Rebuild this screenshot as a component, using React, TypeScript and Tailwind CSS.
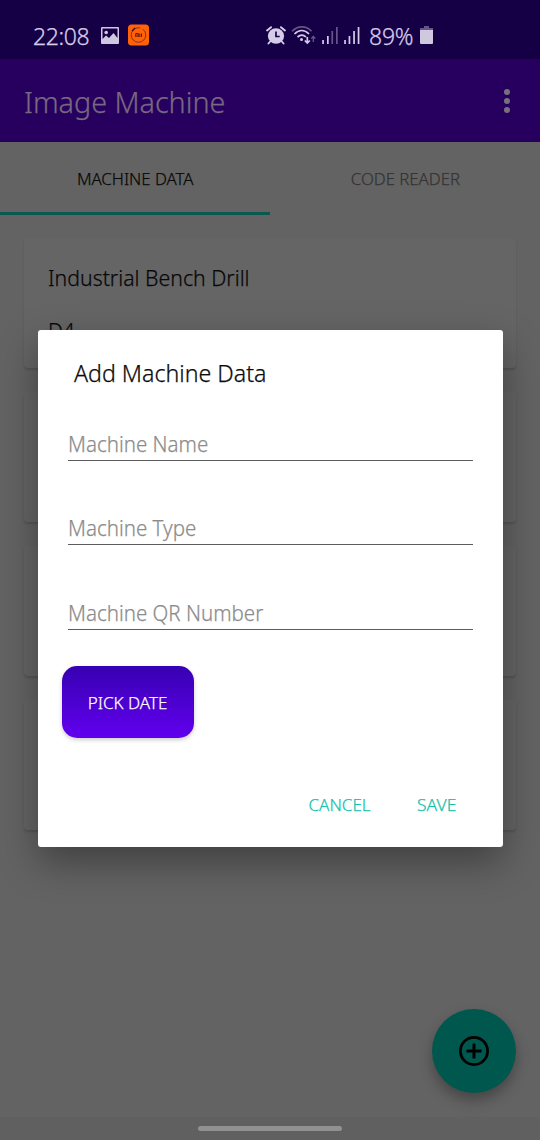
import type { ReactNode } from "react";

function StatusBar() {
  return (
    <div className="flex h-[59px] items-start bg-[#160045] pl-[33px] pt-[24px] text-[#d5cce8]">
      <span className="w-[68px] text-[23px] leading-[24px] tracking-[-0.35px]">22:08</span>
      <svg className="mt-[3px] h-[17px] w-[18px]" viewBox="0 0 18 17">
        <path fill="#cfc8df" fillRule="evenodd" d="M1 0h16a1 1 0 0 1 1 1v15a1 1 0 0 1-1 1H1a1 1 0 0 1-1-1V1a1 1 0 0 1 1-1Zm.5 1.500v10.500l3.500-3.500 3 2.500 4.500-5 4 5V1.500Z" />
        <circle cx="5.200" cy="5.500" r="1.800" fill="#cfc8df" />
      </svg>
      <svg className="ml-[9px] h-[22px] w-[21px]" viewBox="0 0 21 22">
        <rect y="0.500" width="21" height="21" rx="3.500" fill="#ff6208" />
        <circle cx="10.500" cy="11" r="7.300" fill="none" stroke="#7a2c18" strokeWidth="0.900" strokeDasharray="36 3" />
        <path d="M4 7l3-3" stroke="#3a1010" strokeWidth="1.200" />
        <path d="M7.700 13V9.500h2.600v3.500M9 10.500V13M11.800 9.500V13M13.500 9.500V13" fill="none" stroke="#5b1d18" strokeWidth="1" />
      </svg>
      <svg className="ml-[117px] mt-[2px] h-[19px] w-[20px]" viewBox="0 0 19 19" preserveAspectRatio="none">
        <circle cx="9.500" cy="10" r="7.700" fill="#d5cce8" />
        <path d="M1 4.500 4.800 1.200M18 4.500l-3.800-3.300M4 15.500l-1.700 2M15 15.500l1.700 2" stroke="#d5cce8" strokeWidth="1.800" strokeLinecap="round" />
        <path d="M9.500 5.500v5H13" fill="none" stroke="#160045" strokeWidth="1.600" />
      </svg>
      <svg className="ml-[5px] mt-[1px] h-[20px] w-[25px]" viewBox="0 0 25 20" fill="none" strokeWidth="1.700">
        <path d="M1 6.300C6.500.3 15.500.3 20.500 6.300" stroke="#65558a" />
        <path d="M3.500 9C8 4.500 13.500 4.500 18 9M6.500 12c3-2.700 5.700-2.700 8.500 0" stroke="#d5cce8" />
        <circle cx="10.500" cy="14.500" r="1.500" fill="#d5cce8" />
        <path d="M16.300 12v5.500M13.800 15.500l2.500 2.500 2.500-2.500" stroke="#d5cce8" />
        <path d="M22.300 17v-5M20.300 13.500l2-2 2 2" stroke="#65558a" strokeWidth="1.300" />
      </svg>
      <svg className="ml-[6px] mt-[2px] h-[19px] w-[40px]" viewBox="0 0 40 19">
        <path d="M.2 14h1.700v4H.2zM5 10h1.700v8H5zM22.200 14h1.700v4h-1.700zM26.600 10h1.700v8h-1.700zM31.200 5h1.700v13h-1.700zM35.700 1h1.700v17h-1.700z" fill="#d5cce8" />
        <path d="M9.400 5h1.700v13H9.400zM14 1h1.700v17H14z" fill="#65558a" />
      </svg>
      <span className="ml-[7px] w-[51px] text-[23px] leading-[24px] tracking-[-0.2px]">89%</span>
      <svg className="mt-[2px] h-[18px] w-[13px]" viewBox="0 0 13 18">
        <path d="M4 0h5v2h4v2.500H0V2h4z" fill="#65558a" />
        <path d="M0 4h13v13a1 1 0 0 1-1 1H1a1 1 0 0 1-1-1z" fill="#cfc8df" />
      </svg>
    </div>
  );
}

function Card({ children }: { children?: ReactNode }) {
  return (
    <div className="h-[130px] rounded-[4px] bg-[#656565] px-6 pt-[23px] text-[22px] leading-[32px] text-[#080808] shadow-[0_2px_2px_rgba(0,0,0,0.14)]">
      {children}
    </div>
  );
}

function Field({ label }: { label: string }) {
  return (
    <div className="h-[84.500px]">
      <div className="flex h-[36px] items-start border-b border-[#5c5c5c] text-[22px] leading-[36px] text-[#8c8c8c]">
        <span className="origin-left scale-x-[0.933] whitespace-nowrap">{label}</span>
      </div>
    </div>
  );
}

export default function App() {
  return (
    <div className="relative flex h-[1140px] w-[540px] flex-col overflow-hidden bg-[#636363] font-['Noto_Sans',sans-serif] font-light [-webkit-text-stroke:0.25px]">
      <StatusBar />
      <header className="flex h-[83px] shrink-0 items-center justify-between bg-[#27005f] pl-6 pr-[30px]">
        <h1 className="origin-left scale-x-[0.957] pt-[2px] text-[30px]  text-[#77697f]">Image Machine</h1>
        <div className="flex flex-col gap-[3px]">
          <i className="size-[6px] rounded-full bg-[#77717c]" />
          <i className="size-[6px] rounded-full bg-[#77717c]" />
          <i className="size-[6px] rounded-full bg-[#77717c]" />
        </div>
      </header>
      <nav className="flex h-[73px] shrink-0 text-center text-[17px] leading-[74px]">
        <div className="w-[270px] border-b-3 border-[#0b5851] text-[#080808]">
          <span className="inline-block scale-x-[0.985]">MACHINE DATA</span>
        </div>
        <div className="w-[270px] text-[#333333]">
          <span className="inline-block scale-x-[0.985]">CODE READER</span>
        </div>
      </nav>
      <main className="flex flex-1 flex-col gap-[24px] px-6 pt-[23px]">
        <Card>
          <p className="origin-left scale-x-[0.966]">Industrial Bench Drill</p>
          <p className="mt-[21px] origin-left scale-x-[0.95]">D4</p>
        </Card>
        <Card />
        <Card />
        <Card />
      </main>
      <footer className="flex h-[23px] shrink-0 justify-center bg-[#606060] pt-[9px]">
        <div className="h-[5px] w-[144px] rounded-full bg-[#919191]" />
      </footer>

      <button className="absolute left-[432px] top-[1009px] flex size-[84px] items-center justify-center rounded-full bg-[#00574e] shadow-[0_7px_14px_rgba(0,0,0,0.3)]">
        <svg className="size-[30px]" viewBox="0 0 30 30" fill="none" stroke="#000">
          <circle cx="15" cy="15" r="13.600" strokeWidth="2.800" />
          <path d="M15 7.500v15M7.500 15h15" strokeWidth="3" />
        </svg>
      </button>

      <section className="absolute left-[37.500px] top-[329.500px] flex h-[517px] w-[465px] flex-col rounded-[3px] bg-white pl-[30px] pr-[30px] shadow-[0_15px_38px_rgba(0,0,0,0.36)]">
        <h2 className="flex h-[95px] items-start pl-[6.500px] pt-[25px] text-[24px] leading-[36px] text-[#0b0b0b]">
          <span className="origin-left scale-x-[0.965] whitespace-nowrap">Add Machine Data</span>
        </h2>
        <Field label="Machine Name" />
        <Field label="Machine Type" />
        <Field label="Machine QR Number" />
        <button className="-ml-[6px] -mt-[12px] h-[72px] w-[132px] shrink-0 rounded-[15px] bg-linear-to-b from-[#3700b3] to-[#6200ee] pt-[2px] text-[17px] text-white shadow-[0_2px_4px_rgba(0,0,0,0.2)]">
          PICK DATE
        </button>
        <div className="mt-[54px] flex justify-end pr-[16px] text-[17px] leading-[26px] text-[#18bfae]">
          <button className="w-[62px] text-left">CANCEL</button>
          <button className="ml-[46px] w-[40px] origin-left scale-x-[1.030] text-left">SAVE</button>
        </div>
      </section>
    </div>
  );
}
